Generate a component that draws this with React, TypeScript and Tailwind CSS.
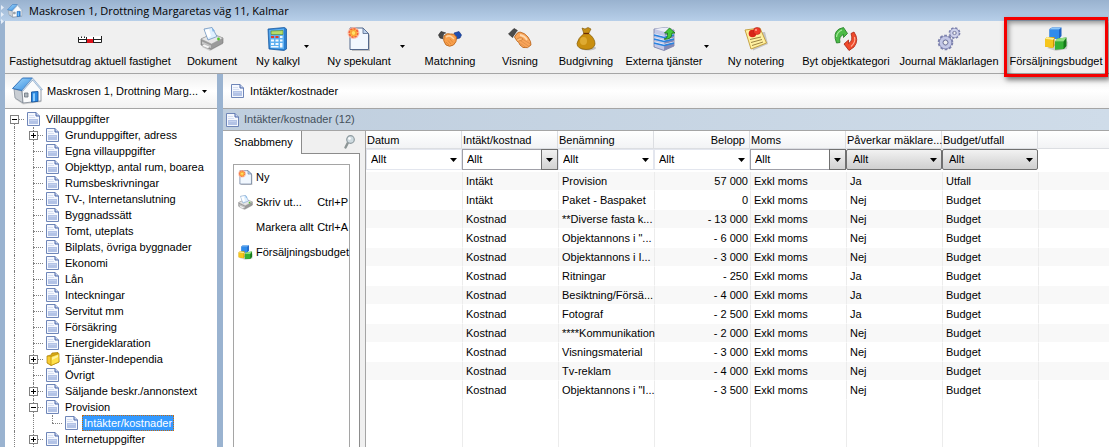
import type { ReactNode } from "react"
import clsx from "clsx"

type IconProps = { className?: string }

function HouseIcon({ className }: IconProps) {
  return (
    <svg viewBox="0 0 31 28" className={className} aria-hidden="true">
      <defs>
        <linearGradient id="roof" x1="0" y1="0" x2="1" y2="1">
          <stop offset="0" stopColor="#a8dcfd" />
          <stop offset="1" stopColor="#2f88de" />
        </linearGradient>
      </defs>
      <path d="M3 22 L11 27.5 L30 25 L28 22 Z" fill="#000" opacity="0.15" />
      <path d="M2 12 L10 14 L11 26 L3 21 Z" fill="#c9ced4" stroke="#7d8792" strokeWidth="0.7" />
      <path d="M10 13 L21 2.5 L29 12 V24 L11 26 Z" fill="#fafbfc" stroke="#7d8792" strokeWidth="0.8" />
      <path d="M0.5 11.5 L10.5 1 H20.5 L10 13.5 Z" fill="url(#roof)" stroke="#2467b3" strokeWidth="0.9" />
      <path d="M20.5 1 L30.5 12.5 L29 13 L20.5 3 L11 14 L10 13.5 Z" fill="#d5e6f5" stroke="#6a8fb8" strokeWidth="0.5" />
      <path d="M12.5 16 H16 V20 H12.5 Z" fill="#aeb6bd" stroke="#6b747d" strokeWidth="0.8" />
      <path d="M19.5 15 L26 14.5 V24.3 L19.5 25 Z" fill="#2b8ae4" stroke="#16569f" strokeWidth="0.9" />
      <path d="M21 16.5 L23 16.3 V24 L21 24.2 Z" fill="#8ccbfa" />
    </svg>
  )
}

function PageIcon({ className }: IconProps) {
  return (
    <svg viewBox="0 0 13 14" className={className} aria-hidden="true">
      <path d="M0.5 0.5 H9 L12.5 4 V13.5 H0.5 Z" fill="#f5f8fe" stroke="#6f86b8" />
      <path d="M9 0.5 V4 H12.5" fill="#c8d4ee" stroke="#4a66a8" />
      <path d="M2 7 H11 V12 H2 Z" fill="#b3c3e6" />
      <path d="M2 3.5 H7 M2 5.5 H8" stroke="#d5def2" />
      <path d="M3 8.5 H10" stroke="#c9d6f0" strokeWidth="0.8" />
    </svg>
  )
}

function FolderIcon({ className }: IconProps) {
  return (
    <svg viewBox="0 0 14 14" className={className} aria-hidden="true">
      <path d="M1 4 L5 3 L6 1 L12 0.5 L13 10 L5 13.5 L1 11 Z" fill="#d9a915" stroke="#a87c05" strokeWidth="0.7" />
      <path d="M5 4.5 L13 1.5 V10 L5 13.5 Z" fill="#ffe04a" stroke="#b58a0b" strokeWidth="0.7" />
      <path d="M1.5 4.5 L4.5 5 V12.5 L1.5 10.5 Z" fill="#f7cc33" />
      <path d="M6 5.5 L12 3 V5 L6 8 Z" fill="#fff3a0" />
    </svg>
  )
}

function RulerIcon({ className }: IconProps) {
  return (
    <svg viewBox="0 0 24 24" className={className} aria-hidden="true">
      <path d="M0.5 10 V15.5 H23.5 V9" fill="#fff" stroke="#222" />
      <path d="M1 12.5 H23" stroke="#222" />
      <path d="M9 12 H15 V16 H9 Z" fill="#e0131b" />
      <path d="M3.5 9.5 V11 M6.5 9.5 V11 M8.5 10 V16 M15.5 10 V16" stroke="#222" />
    </svg>
  )
}

function PrinterIcon({ className }: IconProps) {
  return (
    <svg viewBox="0 0 24 24" className={className} aria-hidden="true">
      <path d="M2 20 L10 24 L23 17 L23 14 Z" fill="#000" opacity="0.15" />
      <path d="M1 12 L12 7 L23 11 V16 L11 22.5 L1 18 Z" fill="#9a9a9a" stroke="#777" strokeWidth="0.6" />
      <path d="M1 12 L12 7 L23 11 L11.5 17 Z" fill="#e6e6e6" stroke="#999" strokeWidth="0.5" />
      <path d="M4 2 L12 0.5 L17 9.5 L8 13 Z" fill="#dff0ff" stroke="#6f93bd" strokeWidth="0.8" />
      <path d="M5 3 L9 2 L11 9 L8 11 Z" fill="#fff" />
      <path d="M12 0.5 L15 4 L12.5 4.5 Z" fill="#7fb2e5" />
      <path d="M2 14.5 L11 18.5 V21 L2 17 Z" fill="#c9c9c9" />
      <path d="M4 17 L10 19.5 L8 21.5 L2 19 Z" fill="#f6f6f6" stroke="#999" strokeWidth="0.4" />
      <circle cx="18.5" cy="12" r="1.4" fill="#4fc32a" />
    </svg>
  )
}

function CalculatorIcon({ className }: IconProps) {
  return (
    <svg viewBox="0 0 24 24" className={className} aria-hidden="true">
      <path d="M2 2 L18.5 0.5 L20.5 2 V22 L18 23.5 L3 22 Z" fill="#2c7fd0" stroke="#1c5ea5" strokeWidth="0.8" />
      <path d="M3 3 L18 1.5 V22 L4 21 Z" fill="#5fb0f0" />
      <path d="M5 4 L17 3.5 V7.5 H5 Z" fill="#b7dc6a" stroke="#56872b" strokeWidth="0.6" />
      <path d="M5 9 H8 V11 H5 Z" fill="#e23a2c" />
      <path d="M9.5 9 H12.5 V11 H9.5 Z" fill="#e23a2c" />
      <path
        d="M14 9 H16.5 V11 H14 Z M5 12.5 H8 V14.5 H5 Z M9.5 12.5 H12.5 V14.5 H9.5 Z M14 12.5 H16.5 V14.5 H14 Z M5 16 H8 V18 H5 Z M9.5 16 H12.5 V18 H9.5 Z M14 16 H16.5 V20.5 H14 Z M5 19 H12.5 V20.5 H5 Z"
        fill="#f2f9ff"
      />
    </svg>
  )
}

function NewPageIcon({ className }: IconProps) {
  return (
    <svg viewBox="0 0 24 24" className={className} aria-hidden="true">
      <path d="M4 3 H18 L23 8 V24 H5 Z" fill="#000" opacity="0.2" />
      <path d="M3 1 H16 L21.5 6.5 V22.5 H3 Z" fill="#f1f7fe" stroke="#53688c" strokeWidth="1" />
      <path d="M16 1 V6.5 H21.5 Z" fill="#bcd2ee" stroke="#53688c" strokeWidth="0.8" />
      <circle cx="6.5" cy="6" r="6" fill="#ffb59a" opacity="0.8" />
      <circle cx="6.5" cy="6" r="4.2" fill="#ffc23a" stroke="#f4603c" strokeWidth="1.6" strokeDasharray="2.2 1" />
      <circle cx="6.5" cy="6" r="2.4" fill="#ffe066" stroke="#f58a2c" strokeWidth="0.8" />
    </svg>
  )
}

function HandshakeIcon({ className }: IconProps) {
  return (
    <svg viewBox="0 0 24 24" className={className} aria-hidden="true">
      <path d="M0.5 8 L3 4.5 L8 6 L6 12 L2 11 Z" fill="#4a4a4a" stroke="#222" strokeWidth="0.6" />
      <path d="M23.5 8 L21 4.5 L16 6 L18 12 L22 11 Z" fill="#1f4fb0" stroke="#102d78" strokeWidth="0.6" />
      <path d="M6 7 L8.5 6 L6.5 12 L5 11.5 Z" fill="#e8e8e8" />
      <path d="M6 9 Q9 5.5 12.5 7 Q16 6 18.5 10 Q19 15 15.5 18 Q11.5 20.5 8 18 Q4.5 14 6 9 Z" fill="#f9a04c" stroke="#b45f17" strokeWidth="0.8" />
      <path d="M8 10 Q11 8 13 9.5 L16 12" fill="none" stroke="#ffd3a0" strokeWidth="1.6" />
      <path d="M8 15 L11 18 M10 13.5 L13 17 M12 12 L15 15.5" stroke="#d98338" strokeWidth="0.7" />
    </svg>
  )
}

function HandIcon({ className }: IconProps) {
  return (
    <svg viewBox="0 0 24 24" className={className} aria-hidden="true">
      <path d="M0.5 7 L6 1.5 L9.5 3.5 L4.5 10.5 Z" fill="#4b4b4b" stroke="#222" strokeWidth="0.6" />
      <path d="M5 10.5 L9.5 3.5 L11 4.5 L6.5 11.5 Z" fill="#dcdcdc" />
      <path d="M6.5 10 Q9 5 12 5 Q17 6 20 10 Q23.5 15 23 18 Q20 22 15 20.5 L12 18 Q11 15 9 14 Z" fill="#f9a55a" stroke="#b45f17" strokeWidth="0.8" />
      <path d="M12 8 Q17 9 19 13" fill="none" stroke="#ffd9ae" strokeWidth="1.8" />
      <path d="M13 14 L21 19.5 M12.5 16.5 L18 20.5 M15 12.5 L22.5 17" stroke="#d98a48" strokeWidth="0.7" />
      <path d="M8 13 Q12 9 15 12 Q13 14 10.5 14" fill="#ffbc79" stroke="#c4732a" strokeWidth="0.7" />
    </svg>
  )
}

function MoneyBagIcon({ className }: IconProps) {
  return (
    <svg viewBox="0 0 24 24" className={className} aria-hidden="true">
      <ellipse cx="14" cy="21" rx="8" ry="2.5" fill="#000" opacity="0.2" />
      <path d="M8 1 L11 2 L14 0.5 L17 2 L14.5 7 H10 Z" fill="#c58f16" stroke="#7d5605" strokeWidth="0.6" />
      <path d="M10 6.5 H14.5 Q21 11 21 17 Q20 22.5 12 22.5 Q3 22 3 16.5 Q4 11 10 6.5 Z" fill="#c98f0f" stroke="#835a05" strokeWidth="0.7" />
      <ellipse cx="9.5" cy="14" rx="3.5" ry="4" fill="#edbe4a" opacity="0.6" />
      <path d="M9.5 6.5 H15" stroke="#6c2f05" strokeWidth="1.3" />
    </svg>
  )
}

function ServerIcon({ className }: IconProps) {
  return (
    <svg viewBox="0 0 24 24" className={className} aria-hidden="true">
      <path d="M2 2 L14 0.5 L22 3 V19 L12 23.5 L2 20 Z" fill="#c3c8e6" stroke="#666b99" strokeWidth="0.7" />
      <path d="M13 5 L22 3 V19 L12 23.5 Z" fill="#8288b6" />
      <path d="M2 2 L14 0.5 L22 3 L13 5 Z" fill="#eceef8" />
      <path d="M2 7 L12 9.5 L22 7 M2 11 L12 13.5 L22 11 M2 15 L12 17.5 L22 15" fill="none" stroke="#f2f6ff" strokeWidth="0.9" />
      <path d="M2 8 L12 10.5 L22 8 M2 12 L12 14.5 L22 12 M2 16 L12 18.5 L22 16" fill="none" stroke="#2782df" strokeWidth="1.3" />
      <path d="M12 12 Q16 12 15.5 6 H12.5 L17.5 1 L23 6 H20 Q20 13 12 12 Z" fill="#46c83a" stroke="#177a14" strokeWidth="0.8" />
    </svg>
  )
}

function NoteIcon({ className }: IconProps) {
  return (
    <svg viewBox="0 0 24 24" className={className} aria-hidden="true">
      <path d="M4 7 L21 5 L24 17 L9 23.5 Z" fill="#000" opacity="0.18" />
      <path d="M1 3 L16 1 L22.5 16 L7 22 Q4 12 1 3 Z" fill="#fff0a0" stroke="#c09a36" strokeWidth="0.9" />
      <path d="M6 12.5 L17 10 M7 15.5 L18 12.5 M8 18.5 L19 15" stroke="#8f7638" strokeWidth="0.9" />
      <circle cx="8.5" cy="6.5" r="3.8" fill="#d82418" />
      <circle cx="13" cy="4" r="3.6" fill="#f03b2b" stroke="#a51710" strokeWidth="0.5" />
      <circle cx="12" cy="3" r="1.1" fill="#ff9b8a" />
    </svg>
  )
}

function SwapIcon({ className }: IconProps) {
  return (
    <svg viewBox="0 0 24 24" className={className} aria-hidden="true">
      <path d="M2.5 16 Q-1.5 6 5 2 L9.5 0.5 L13.5 6.5 L9.5 10.5 V7.5 Q4.5 9.5 6 15.5 Z" fill="#4cbb47" stroke="#1f7a22" strokeWidth="0.8" />
      <path d="M2.5 10 Q3 5 8 3" fill="none" stroke="#a6ea9b" strokeWidth="1.2" />
      <path d="M20 5 Q25.5 13 20 20 L15 23.5 L10 17 L14.5 13 V16.5 Q19.5 14 17 6.5 Z" fill="#ef4b2c" stroke="#a82211" strokeWidth="0.8" />
      <path d="M20.5 10 Q22 15 17 19.5" fill="none" stroke="#ffab95" strokeWidth="1.2" />
    </svg>
  )
}

function GearsIcon({ className }: IconProps) {
  return (
    <svg viewBox="0 0 24 24" className={className} aria-hidden="true">
      <circle cx="8.5" cy="15.5" r="6.4" fill="none" stroke="#7d82ae" strokeWidth="2.8" strokeDasharray="2.6 1.42" />
      <circle cx="8.5" cy="15.5" r="4.6" fill="#fff" stroke="#7d82ae" strokeWidth="4" />
      <circle cx="8.5" cy="15.5" r="4.4" fill="none" stroke="#c3c7e6" strokeWidth="3" />
      <circle cx="8.5" cy="15.5" r="2.3" fill="#efefef" stroke="#61668f" strokeWidth="0.8" />
      <circle cx="17.5" cy="6" r="4.8" fill="none" stroke="#7d82ae" strokeWidth="2.2" strokeDasharray="2.2 1.57" />
      <circle cx="17.5" cy="6" r="3.3" fill="#fff" stroke="#7d82ae" strokeWidth="3" />
      <circle cx="17.5" cy="6" r="3.2" fill="none" stroke="#cfd2ec" strokeWidth="2.2" />
      <circle cx="17.5" cy="6" r="1.6" fill="#efefef" stroke="#61668f" strokeWidth="0.7" />
    </svg>
  )
}

function CubesIcon({ className }: IconProps) {
  return (
    <svg viewBox="0 0 24 24" className={className} aria-hidden="true">
      <path d="M3 21 L12 24 L23 22 L24 15 L20 12 Z" fill="#000" opacity="0.15" />
      <path d="M5.5 2 L8 0.5 H17.5 V9 L15 12 H5.5 Z" fill="#1d62c4" />
      <path d="M5.5 2.5 H15 V12 H5.5 Z" fill="#2f8cec" />
      <path d="M5.5 2.5 L8 0.5 H17.5 L15 2.5 Z" fill="#8cc8fb" />
      <path d="M1 12 L3 10 H10.5 V18.5 L9 21 L1 19.5 Z" fill="#c99403" />
      <path d="M1 12 L9 13 V21 L1 19.5 Z" fill="#f6c61c" />
      <path d="M1 12 L3 10 L10.5 11 L9 13 Z" fill="#ffef8c" />
      <path d="M11 14.5 L13.5 11.5 L22.5 10.5 V19 L20 22 L11 22.5 Z" fill="#157a1a" />
      <path d="M11 14.5 H19.5 V22 L11 22.5 Z" fill="#35b135" />
      <path d="M11 14.5 L13.5 11.5 L22.5 10.5 L19.5 14.5 Z" fill="#8fe07f" />
    </svg>
  )
}

function MagnifierIcon({ className }: IconProps) {
  return (
    <svg viewBox="0 0 12 14" className={className} aria-hidden="true">
      <path d="M4 7.5 L1.5 12.5" stroke="#8d9696" strokeWidth="2.4" strokeLinecap="round" />
      <circle cx="6.5" cy="4.5" r="3.8" fill="#cfdbe0" stroke="#8f9ba0" strokeWidth="1.2" />
      <circle cx="5.5" cy="3.5" r="1.3" fill="#fff" />
    </svg>
  )
}

function Caret({ className = "h-1 w-[7px]" }: IconProps) {
  return (
    <svg viewBox="0 0 7 4" className={className} aria-hidden="true">
      <path d="M0 0 H7 L3.5 4 Z" fill="#000" />
    </svg>
  )
}

type Tool = {
  label: string
  Icon: (p: IconProps) => ReactNode
  size: string
  menu?: boolean
  highlighted?: boolean
}

const tools: Tool[] = [
  { label: "Fastighetsutdrag aktuell fastighet", Icon: RulerIcon, size: "w-[170px]" },
  { label: "Dokument", Icon: PrinterIcon, size: "w-[74px]" },
  { label: "Ny kalkyl", Icon: CalculatorIcon, size: "ml-2 w-[42px]", menu: true },
  { label: "Ny spekulant", Icon: NewPageIcon, size: "ml-2.5 w-[72px]", menu: true },
  { label: "Matchning", Icon: HandshakeIcon, size: "w-[82px]" },
  { label: "Visning", Icon: HandIcon, size: "w-[58px]" },
  { label: "Budgivning", Icon: MoneyBagIcon, size: "w-[74px]" },
  { label: "Externa tjänster", Icon: ServerIcon, size: "ml-1.5 w-[70px]", menu: true },
  { label: "Ny notering", Icon: NoteIcon, size: "w-[86px]" },
  { label: "Byt objektkategori", Icon: SwapIcon, size: "w-[94px]" },
  { label: "Journal Mäklarlagen", Icon: GearsIcon, size: "w-[112px]" },
  { label: "Försäljningsbudget", Icon: CubesIcon, size: "w-[102px]", highlighted: true },
]

function Toolbar() {
  return (
    <div className="flex h-[53px] shrink-0 border-b border-[#a5a5a5] bg-[#f0f0f0]">
      {tools.map(({ label, Icon, size, menu, highlighted }) => (
        <div key={label} className="relative flex shrink-0">
          <button type="button" className={clsx("flex flex-col items-center pt-1.5", size)}>
            <Icon className="size-6 shrink-0" />
            <span className="mt-0.5 leading-4 whitespace-nowrap">{label}</span>
          </button>
          {menu && (
            <button type="button" aria-label={`${label}, fler val`} className="flex w-3.5 justify-center pt-6">
              <Caret className="h-[3px] w-[5px]" />
            </button>
          )}
          {highlighted && (
            <div className="pointer-events-none absolute -inset-x-px -top-1 -bottom-1 z-10 border-3 border-[#f40000] shadow-[2px_3px_5px_rgba(0,0,0,0.5),inset_2px_3px_5px_rgba(0,0,0,0.4)]" />
          )}
        </div>
      ))}
    </div>
  )
}

type Node = { label: string; depth: number; open?: boolean; folder?: boolean; selected?: boolean }

const nodes: Node[] = [
  { label: "Villauppgifter", depth: 0, open: true },
  { label: "Grunduppgifter, adress", depth: 1, open: false },
  { label: "Egna villauppgifter", depth: 1 },
  { label: "Objekttyp, antal rum, boarea", depth: 1 },
  { label: "Rumsbeskrivningar", depth: 1 },
  { label: "TV-, Internetanslutning", depth: 1 },
  { label: "Byggnadssätt", depth: 1 },
  { label: "Tomt, uteplats", depth: 1 },
  { label: "Bilplats, övriga byggnader", depth: 1 },
  { label: "Ekonomi", depth: 1 },
  { label: "Lån", depth: 1 },
  { label: "Inteckningar", depth: 1 },
  { label: "Servitut mm", depth: 1 },
  { label: "Försäkring", depth: 1 },
  { label: "Energideklaration", depth: 1 },
  { label: "Tjänster-Independia", depth: 1, open: false, folder: true },
  { label: "Övrigt", depth: 1 },
  { label: "Säljande beskr./annonstext", depth: 1, open: false },
  { label: "Provision", depth: 1, open: true },
  { label: "Intäkter/kostnader", depth: 2, selected: true },
  { label: "Internetuppgifter", depth: 1, open: false },
]

function TreeRow({ node }: { node: Node }) {
  const { label, depth, open, folder, selected } = node
  const hasBox = open !== undefined
  return (
    <li className="flex h-4 items-center">
      {Array.from({ length: depth }, (_, i) => (
        <span key={i} className="ml-[9px] h-4 w-2.5 shrink-0 border-l border-dotted border-[#808080]" />
      ))}
      <span className="relative h-4 w-[19px] shrink-0">
        <span
          className={clsx(
            "absolute left-[9px] border-l border-dotted border-[#808080]",
            depth === 0 && "top-2 bottom-0",
            depth === 1 && "inset-y-0",
            depth === 2 && "top-0 h-2"
          )}
        />
        <span className="absolute top-2 right-0 left-[9px] border-t border-dotted border-[#808080]" />
        {hasBox && (
          <button
            type="button"
            aria-label={label}
            aria-expanded={open}
            className="absolute top-1 left-[5px] size-[9px] border border-[#808080] bg-white"
          >
            <svg viewBox="0 0 7 7" className="size-[7px]" aria-hidden="true">
              <path d={open ? "M1 3.5 H6" : "M1 3.5 H6 M3.5 1 V6"} stroke="#000" />
            </svg>
          </button>
        )}
      </span>
      <span className="flex w-[19px] shrink-0 justify-center">
        {folder ? <FolderIcon className="size-3.5" /> : <PageIcon className="h-3.5 w-[13px]" />}
      </span>
      <a
        href="#"
        className={clsx(
          "ml-px border px-px leading-[14px] whitespace-nowrap",
          selected ? "border-dotted border-[#c46a10] bg-[#3399ff] text-white" : "border-transparent"
        )}
      >
        {label}
      </a>
    </li>
  )
}

function Sidebar() {
  return (
    <aside className="flex w-[212px] shrink-0 flex-col bg-white">
      <button
        type="button"
        className="flex h-[35px] shrink-0 items-center border-b border-[#a5a5a5] bg-linear-to-b from-[#efefef] via-white to-[#f2f2f2] pl-[7px]"
      >
        <HouseIcon className="h-7 w-[31px]" />
        <span className="ml-1 whitespace-nowrap">Maskrosen 1, Drottning Marg...</span>
        <Caret className="mr-2.5 ml-auto h-[3px] w-[5px]" />
      </button>
      <ul className="pt-0.5">
        {nodes.map((node) => (
          <TreeRow key={node.label} node={node} />
        ))}
      </ul>
    </aside>
  )
}

const quickMenu = [
  { label: "Ny", Icon: NewPageIcon },
  { label: "Skriv ut...", keys: "Ctrl+P", Icon: PrinterIcon },
  { label: "Markera allt", keys: "Ctrl+A" },
  { label: "Försäljningsbudget", Icon: CubesIcon },
]

function QuickMenu() {
  return (
    <div className="flex w-[137px] shrink-0 flex-col">
      <div className="flex h-[23px] shrink-0">
        <div className="flex w-[79px] items-center border-r border-[#8c8c8c] bg-white pl-[11px]">Snabbmeny</div>
        <div className="flex flex-1 justify-end border-b border-[#8c8c8c] pt-1 pr-1">
          <MagnifierIcon className="h-3.5 w-3" />
        </div>
      </div>
      <div className="flex grow flex-col border-r border-[#8c8c8c] bg-white pt-2.5 pr-[9px] pl-2.5">
        <ul className="grow border border-b-0 border-[#a5a5a5]">
          {quickMenu.map(({ label, keys, Icon }) => (
            <li key={label}>
              <button type="button" className="flex h-[25px] w-full items-center pr-px pl-1 whitespace-nowrap">
                <span className="w-[18px] shrink-0">{Icon && <Icon className="size-[15px]" />}</span>
                <span>{label}</span>
                {keys && <span className="ml-auto">{keys}</span>}
              </button>
            </li>
          ))}
        </ul>
      </div>
    </div>
  )
}

type Kind = "flat" | "combo" | "button"

const columns: { label: string; kind: Kind; right?: boolean }[] = [
  { label: "Datum", kind: "flat" },
  { label: "Intäkt/kostnad", kind: "combo" },
  { label: "Benämning", kind: "flat" },
  { label: "Belopp", kind: "flat", right: true },
  { label: "Moms", kind: "combo" },
  { label: "Påverkar mäklare...", kind: "button" },
  { label: "Budget/utfall", kind: "button" },
]

const rows = [
  ["", "Intäkt", "Provision", "57 000", "Exkl moms", "Ja", "Utfall"],
  ["", "Intäkt", "Paket - Baspaket", "0", "Exkl moms", "Nej", "Budget"],
  ["", "Kostnad", "**Diverse fasta k...", "- 13 000", "Exkl moms", "Nej", "Budget"],
  ["", "Kostnad", "Objektannons i \"...", "- 6 000", "Exkl moms", "Nej", "Budget"],
  ["", "Kostnad", "Objektannons i I...", "- 3 000", "Exkl moms", "Nej", "Budget"],
  ["", "Kostnad", "Ritningar", "- 250", "Exkl moms", "Ja", "Budget"],
  ["", "Kostnad", "Besiktning/Försä...", "- 4 000", "Exkl moms", "Ja", "Budget"],
  ["", "Kostnad", "Fotograf", "- 2 500", "Exkl moms", "Ja", "Budget"],
  ["", "Kostnad", "****Kommunikation", "- 2 000", "Exkl moms", "Nej", "Budget"],
  ["", "Kostnad", "Visningsmaterial", "- 3 000", "Exkl moms", "Nej", "Budget"],
  ["", "Kostnad", "Tv-reklam", "- 4 000", "Exkl moms", "Nej", "Budget"],
  ["", "Kostnad", "Objektannons i \"I...", "- 3 500", "Exkl moms", "Nej", "Budget"],
]

function Filter({ label, kind }: { label: string; kind: Kind }) {
  return (
    <div className="relative">
      <select
        aria-label={`Filtrera ${label}`}
        className={clsx(
          "block h-[21px] w-full appearance-none border",
          kind === "flat" && "border-[#e3e6ee] bg-white pl-1",
          kind === "combo" && "border-[#a0a0a8] bg-white pl-1",
          kind === "button" && "rounded-xs border-[#707070] bg-linear-to-b from-[#f2f2f2] to-[#cfcfcf] pl-1.5"
        )}
      >
        <option>Allt</option>
      </select>
      <span
        className={clsx(
          "pointer-events-none absolute inset-y-0 right-0 flex w-[17px] items-center justify-center",
          kind === "combo" && "border border-[#707070] bg-linear-to-b from-[#f2f2f2] to-[#d2d2d2]"
        )}
      >
        <Caret />
      </span>
    </div>
  )
}

function BudgetTable() {
  return (
    <table className="h-full w-full table-fixed border-separate border-spacing-0 bg-white">
      <colgroup>
        {columns.map((c) => (
          <col key={c.label} className="w-24" />
        ))}
        <col />
      </colgroup>
      <thead>
        <tr className="h-[18px]">
          {columns.map((c) => (
            <th
              key={c.label}
              className={clsx(
                "h-[18px] border-r border-b border-[#dcdee2] bg-linear-to-b from-white to-[#f2f3f5] p-0 leading-4 font-normal whitespace-nowrap",
                c.right ? "pr-1 text-right" : "pl-px text-left"
              )}
            >
              {c.label}
            </th>
          ))}
          <th className="border-b border-[#dcdee2] bg-linear-to-b from-white to-[#f2f3f5] p-0" />
        </tr>
        <tr className="h-[23px]">
          {columns.map((c) => (
            <td key={c.label} className="h-[23px] p-0 align-top">
              <Filter label={c.label} kind={c.kind} />
            </td>
          ))}
          <td className="p-0" />
        </tr>
      </thead>
      <tbody>
        {rows.map((row, i) => (
          <tr key={i} className={clsx("h-[19px]", i % 2 === 0 && "bg-[#f8f8f8]")}>
            {row.map((cell, j) => (
              <td
                key={j}
                className={clsx(
                  "h-[19px] border-b border-b-white p-0 leading-4 whitespace-nowrap",
                  j > 0 && "border-l border-l-[#ececec]",
                  j === 3 ? "pr-0.5 text-right" : "pl-[3px]"
                )}
              >
                {cell}
              </td>
            ))}
            <td className="border-b border-l border-b-white border-l-[#ececec] p-0" />
          </tr>
        ))}
        {/* takes up the remaining height so the column lines reach the bottom */}
        <tr>
          <td className="p-0" />
          {columns.map((c) => (
            <td key={c.label} className="border-l border-[#ececec] p-0" />
          ))}
        </tr>
      </tbody>
    </table>
  )
}

export default function App() {
  return (
    <div className="flex h-screen flex-col overflow-hidden bg-[#9ab3d0] font-['Liberation_Sans',Arial,sans-serif] text-[11px] text-black">
      <header className="flex h-[21px] shrink-0 items-center bg-linear-to-b from-[#99b2cf] to-[#b7cfe9]">
        <svg viewBox="0 0 5 24" className="h-6 w-[5px] self-start" aria-hidden="true">
          <path d="M1 5 L4 7.5 L1 10 Z M1 12 L4 14.5 L1 17 Z M1 19 L4 21.5 L1 24 Z" fill="#e6eef8" />
        </svg>
        <HouseIcon className="ml-0.5 h-3.5 w-4" />
        <h1 className="ml-1.5 font-['Open_Sans',sans-serif] text-[11px] leading-4">
          Maskrosen 1, Drottning Margaretas väg 11, Kalmar
        </h1>
      </header>
      <div className="flex min-h-0 grow flex-col pl-[5px]">
        <Toolbar />
        <div className="flex min-h-0 grow gap-1.5">
          <Sidebar />
          <main className="flex min-w-0 grow flex-col bg-[#f0f0f0]">
            <div className="flex h-[35px] shrink-0 items-center border-b border-[#a5a5a5] bg-linear-to-b from-[#efefef] via-white to-[#f2f2f2] pl-2">
              <PageIcon className="h-3.5 w-[13px]" />
              <span className="ml-1.5">Intäkter/kostnader</span>
            </div>
            <div className="flex h-[22px] shrink-0 items-center border-b border-[#a5a5a5] bg-linear-to-r from-[#bfcede] to-[#cfdce9] pl-[3px] text-[#44505c]">
              <PageIcon className="h-3.5 w-[13px]" />
              <h2 className="ml-[5px]">Intäkter/kostnader (12)</h2>
            </div>
            <div className="flex min-h-0 grow">
              <QuickMenu />
              <div className="ml-[5px] min-w-0 grow border-l border-[#a5a5a5]">
                <BudgetTable />
              </div>
            </div>
          </main>
        </div>
      </div>
    </div>
  )
}
